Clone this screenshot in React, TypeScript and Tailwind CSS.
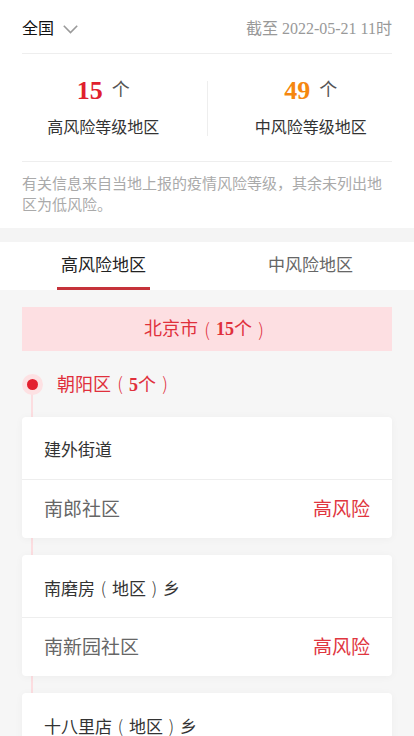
import type { ReactNode } from "react";

type Area = { street: string; community: string };

const areas: Area[] = [
  { street: "建外街道", community: "南郎社区" },
  { street: "南磨房（地区）乡", community: "南新园社区" },
  { street: "十八里店（地区）乡", community: "小武基村" },
  { street: "潘家园街道", community: "华威西里社区" },
];

// full-width brackets drawn centred in their em box
function Paren({ ch }: { ch: "(" | ")" }) {
  return (
    <span className="inline-block w-[1em] text-center font-['Noto_Sans_CJK_SC',sans-serif] font-light">
      {ch}
    </span>
  );
}

function withParens(text: string): ReactNode[] {
  return text.split(/([（）])/).map((part, i) =>
    part === "（" ? <Paren key={i} ch="(" /> : part === "）" ? <Paren key={i} ch=")" /> : part,
  );
}

export default function App() {
  return (
    <div className="min-h-screen bg-[#f6f6f6] font-['Liberation_Serif','Noto_Sans_CJK_SC',serif]">
      <section className="bg-white">
        <div className="mx-[22px] flex h-[54px] items-center justify-between border-b border-[#eeeeee] pt-[4px]">
          <div className="flex items-center gap-[9px] text-[16px] text-[#111]">
            <span>全国</span>
            <svg width="15" height="9" viewBox="0 0 15 9" fill="none" className="mt-[1px]">
              <path d="M0.8 0.8 L7.5 7.6 L14.2 0.8" stroke="#9a9a9a" strokeWidth="1.6" />
            </svg>
          </div>
          <span className="text-[16px] text-[#999]">截至 2022-05-21 11时</span>
        </div>

        <div className="flex h-[107px]">
          <div className="flex flex-1 flex-col items-center pt-[21px]">
            <div className="flex h-[30px] items-center gap-[9px]">
              <span className="text-[26px] font-bold text-[#e0202e]">15</span>
              <span className="text-[18px] text-[#555]">个</span>
            </div>
            <p className="mt-[11px] text-[16px] leading-[24px] text-[#333]">高风险等级地区</p>
          </div>
          <div className="mt-[2px] h-[55px] w-px self-center bg-[#eeeeee]" />
          <div className="flex flex-1 flex-col items-center pt-[21px]">
            <div className="flex h-[30px] items-center gap-[9px]">
              <span className="text-[26px] font-bold text-[#f5870f]">49</span>
              <span className="text-[18px] text-[#555]">个</span>
            </div>
            <p className="mt-[11px] text-[16px] leading-[24px] text-[#333]">中风险等级地区</p>
          </div>
        </div>

        <div className="mx-[22px] border-t border-[#eeeeee] pb-[12px] pt-[12px]">
          <p className="text-[15px] leading-[21px] text-[#aaaaaa]">
            有关信息来自当地上报的疫情风险等级，其余未列出地区为低风险。
          </p>
        </div>
      </section>

      <div className="h-[14px] bg-[#f4f4f4]" />

      <nav className="flex h-[48px] bg-white">
        <div className="relative flex flex-1 items-center justify-center">
          <span className="text-[17px] text-[#222]">高风险地区</span>
          <span className="absolute bottom-0 h-[3px] w-[93px] bg-[#c5323a]" />
        </div>
        <div className="flex flex-1 items-center justify-center">
          <span className="text-[17px] text-[#666]">中风险地区</span>
        </div>
      </nav>

      <main className="px-[22px] pt-[17px] pb-[20px]">
        <div className="flex h-[44px] items-center justify-center bg-[#fddfe2] text-[18px] text-[#e0303c]">
          北京市
          <Paren ch="(" />
          <span className="font-bold">15</span>个
          <Paren ch=")" />
        </div>

        <div className="relative">
          {/* timeline rail behind the cards */}
          <div className="absolute left-[9px] top-[32px] bottom-0 w-[2px] bg-[#fcdde0]" />

          <div className="relative flex h-[66px] items-center gap-[14px]">
            <span className="flex h-[21px] w-[21px] items-center justify-center rounded-full bg-[#fde1e3]">
              <span className="h-[11px] w-[11px] rounded-full bg-[#e3202f]" />
            </span>
            <span className="text-[18px] text-[#e0303c]">
              朝阳区
              <Paren ch="(" />
              <span className="font-bold">5</span>个
              <Paren ch=")" />
            </span>
          </div>

          <div className="relative flex flex-col gap-[17px]">
            {areas.map((a) => (
              <div
                key={a.street}
                className="rounded-[4px] bg-white shadow-[0_1px_8px_rgba(0,0,0,0.04)]"
              >
                <div className="flex h-[63px] items-center border-b border-[#eeeeee] px-[22px] pt-[6px] text-[17px] text-[#333]">
                  <span>{withParens(a.street)}</span>
                </div>
                <div className="flex h-[58px] items-center justify-between px-[22px] pt-[2px] text-[19px]">
                  <span className="text-[#666]">{a.community}</span>
                  <span className="text-[#e0363f]">高风险</span>
                </div>
              </div>
            ))}
          </div>
        </div>
      </main>
    </div>
  );
}
